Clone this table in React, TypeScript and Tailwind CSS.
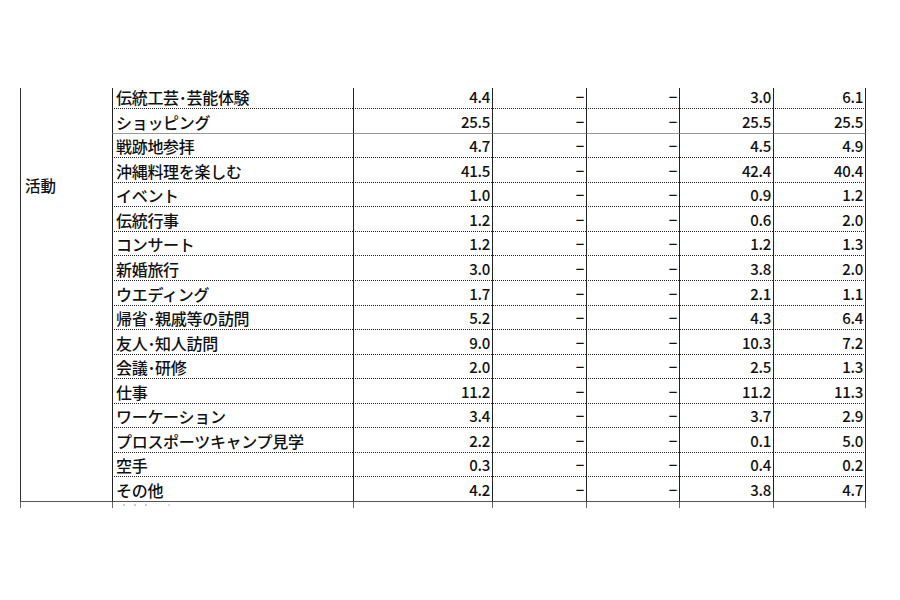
import React from "react";

const rows: [string, string, string, string, string, string][] = [
  ["伝統工芸･芸能体験", "4.4", "−", "−", "3.0", "6.1"],
  ["ショッピング", "25.5", "−", "−", "25.5", "25.5"],
  ["戦跡地参拝", "4.7", "−", "−", "4.5", "4.9"],
  ["沖縄料理を楽しむ", "41.5", "−", "−", "42.4", "40.4"],
  ["イベント", "1.0", "−", "−", "0.9", "1.2"],
  ["伝統行事", "1.2", "−", "−", "0.6", "2.0"],
  ["コンサート", "1.2", "−", "−", "1.2", "1.3"],
  ["新婚旅行", "3.0", "−", "−", "3.8", "2.0"],
  ["ウエディング", "1.7", "−", "−", "2.1", "1.1"],
  ["帰省･親戚等の訪問", "5.2", "−", "−", "4.3", "6.4"],
  ["友人･知人訪問", "9.0", "−", "−", "10.3", "7.2"],
  ["会議･研修", "2.0", "−", "−", "2.5", "1.3"],
  ["仕事", "11.2", "−", "−", "11.2", "11.3"],
  ["ワーケーション", "3.4", "−", "−", "3.7", "2.9"],
  ["プロスポーツキャンプ見学", "2.2", "−", "−", "0.1", "5.0"],
  ["空手", "0.3", "−", "−", "0.4", "0.2"],
  ["その他", "4.2", "−", "−", "3.8", "4.7"],
];

export default function App() {
  return (
    <div className="w-[900px] h-[600px] bg-white overflow-hidden pt-[88px] pl-[20px] text-[#111]" style={{ fontFamily: '"Noto Sans CJK JP", "Noto Sans", sans-serif' }}>
      <div className="grid grid-cols-[92px_241px_139px_94px_93px_94px_93px] grid-rows-[21px_repeat(16,24.5625px)_6px]">
        <div className="row-span-17 border-l border-l-[#333] border-b border-b-[#555] pl-[4px] pt-[87px] text-[15.5px] leading-[20px] font-medium">
          活動
        </div>
        {rows.map((r, i) => {
          const last = i === rows.length - 1;
          const bottom = last
            ? "border-b border-b-[#555]"
            : i === 1
            ? "border-b border-b-[#9a9a9a]"
            : "border-b [border-bottom-style:dotted] border-b-[#222]";
          return (
            <React.Fragment key={i}>
              <div className={`border-l border-l-[#222] ${bottom} pl-[3px] flex items-end pb-[1px] text-[16px] leading-[20px] font-medium whitespace-nowrap tracking-[-0.3px]`}>
                {r[0]}
              </div>
              {r.slice(1).map((v, j) => (
                <div
                  key={j}
                  className={`border-l border-l-[#222] ${bottom} ${j === 4 ? "border-r border-r-[#222]" : ""} pr-[2px] flex items-end justify-end pb-[1px] text-[15px] leading-[20px] font-medium tracking-[-0.3px]`}
                >
                  {v}
                </div>
              ))}
            </React.Fragment>
          );
        })}
        <div className="border-l border-l-[#666]"></div>
        <div className="border-l border-l-[#666] flex items-start gap-[9px] pl-[10px] pt-[2px]">
          <span className="w-[2px] h-[2px] bg-[#ccc]"></span>
          <span className="w-[2px] h-[2px] bg-[#ccc]"></span>
          <span className="w-[2px] h-[2px] bg-[#ccc]"></span>
          <span className="w-[2px] h-[2px] bg-[#ddd] ml-[12px]"></span>
        </div>
        <div className="border-l border-l-[#666]"></div>
        <div className="border-l border-l-[#666]"></div>
        <div className="border-l border-l-[#666]"></div>
        <div className="border-l border-l-[#666]"></div>
        <div className="border-l border-l-[#666] border-r border-r-[#666]"></div>
      </div>
    </div>
  );
}
